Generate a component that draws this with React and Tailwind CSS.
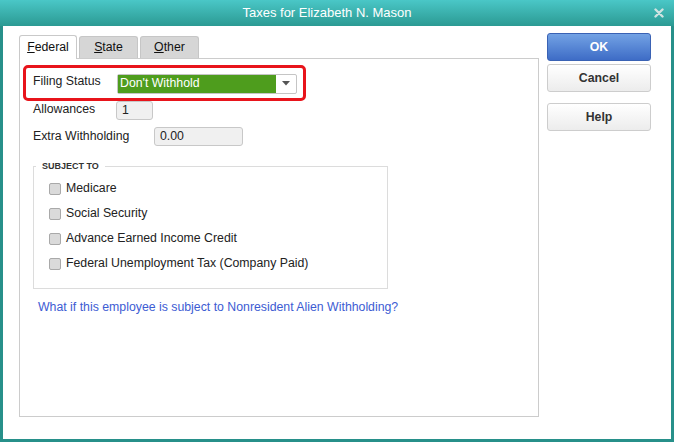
import React from 'react';

const subjectTo = [
  'Medicare',
  'Social Security',
  'Advance Earned Income Credit',
  'Federal Unemployment Tax (Company Paid)',
];

const Tab = ({ letter, rest, active }) => (
  <div
    className={
      active
        ? 'relative z-10 -mb-px flex h-[24px] w-[58px] items-center justify-center rounded-t-[3px] border border-b-0 border-[#c9c9c9] bg-white pb-[1px]'
        : 'flex h-[22px] w-[59px] items-center justify-center rounded-t-[3px] border border-b-0 border-[#c6c6c6] bg-[#d6d6d6]'
    }
  >
    <span className="text-[12.3px] text-[#111]">
      <span className="underline">{letter}</span>
      {rest}
    </span>
  </div>
);

const Button = ({ children, primary, className = '' }) => (
  <button
    className={`flex h-[28px] w-[104px] items-center justify-center rounded-[3px] border text-[12.3px] font-bold ${
      primary
        ? 'border-[#3a62b4] bg-gradient-to-b from-[#73a2e4] to-[#3e6cc6] text-white'
        : 'border-[#cdcdcd] bg-gradient-to-b from-white to-[#ececec] text-[#333]'
    } ${className}`}
  >
    {children}
  </button>
);

export default function App() {
  return (
    <div className="h-[443px] w-[674px] bg-white font-['Liberation_Sans',Arial,sans-serif]">
      <div className="flex h-[442px] flex-col border-x-[3px] border-b-[3px] border-[#27908a]">
        {/* Title bar */}
        <div className="-mx-[3px] flex h-[26px] items-center bg-gradient-to-b from-[#4ac7c7] to-[#2b9a93]">
          <div className="flex-1 text-center text-[13px] text-white">Taxes for Elizabeth N. Mason</div>
          <div className="flex w-[20px] items-center justify-start pr-[8px]">
            <svg width="10" height="10" viewBox="0 0 10 10">
              <path d="M1.5 1.5 L8.5 8.5 M8.5 1.5 L1.5 8.5" stroke="#cfe3e1" strokeWidth="2.4" strokeLinecap="round" />
            </svg>
          </div>
        </div>

        <div className="flex flex-1 pl-[16px] pt-[7px]">
          {/* Left: tabs + panel */}
          <div className="flex w-[520px] flex-col">
            <div className="mt-[2px] flex items-end gap-[2px]">
              <Tab letter="F" rest="ederal" active />
              <Tab letter="S" rest="tate" />
              <Tab letter="O" rest="ther" />
            </div>
            <div className="h-[359px] border border-[#cccccc] bg-white pl-[3px] pt-[6px]">
              {/* Filing status (highlighted) */}
              <div className="flex h-[36px] w-[283px] items-center rounded-[5px] border-[3px] border-[#e8141b] pl-[7px]">
                <span className="w-[84px] -mt-[3px] text-[12.3px] text-[#222]">Filing Status</span>
                <div className="mt-[1px] flex h-[20px] w-[180px] items-stretch rounded-[2px] border border-[#c5c5c5] bg-white">
                  <div className="flex flex-1 items-center bg-[#4e9d1d] pl-[2px] text-[12.3px] text-white">Don't Withhold</div>
                  <div className="flex w-[20px] items-center justify-center">
                    <svg width="8" height="5" viewBox="0 0 8 5">
                      <path d="M0 0 H8 L4 4.5 Z" fill="#555" />
                    </svg>
                  </div>
                </div>
              </div>

              <div className="pl-[10px]">
                <div className="flex h-[19px] items-center">
                  <span className="w-[83px] -mt-[3px] text-[12.3px] text-[#222]">Allowances</span>
                  <div className="flex h-[19px] w-[37px] items-center rounded-[3px] border border-[#c8c8c8] bg-[#f0f0f0] pl-[5px] text-[12.3px] text-[#222]">1</div>
                </div>
                <div className="mt-[7px] flex h-[19px] items-center">
                  <span className="w-[121px] -mt-[1px] text-[12.3px] text-[#222]">Extra Withholding</span>
                  <div className="flex h-[19px] w-[89px] items-center rounded-[3px] border border-[#c8c8c8] bg-[#f0f0f0] pl-[5px] text-[12.3px] text-[#222]">0.00</div>
                </div>

                <fieldset className="mt-[15px] w-[355px] border border-[#dcdcdc] pb-[12px]">
                  <legend className="ml-[2px] px-[6px] text-[9px] font-bold leading-[11px] text-[#333]">SUBJECT TO</legend>
                  <div className="flex flex-col pl-[15px] pt-[4px]">
                    {subjectTo.map((item) => (
                      <div key={item} className="flex h-[25px] items-center gap-[5px]">
                        <span className="h-[12px] w-[12px] rounded-[2px] border border-[#a9a9a9] bg-[#dadada]" />
                        <span className="text-[12.3px] text-[#222]">{item}</span>
                      </div>
                    ))}
                  </div>
                </fieldset>

                <div className="ml-[5px] mt-[9px] text-[12.3px] text-[#3d5cd3]">
                  What if this employee is subject to Nonresident Alien Withholding?
                </div>
              </div>
            </div>
          </div>

          {/* Right: buttons */}
          <div className="ml-[8px] flex flex-col">
            <Button primary>OK</Button>
            <Button className="mt-[3px]">Cancel</Button>
            <Button className="mt-[11px]">Help</Button>
          </div>
        </div>
      </div>
    </div>
  );
}
